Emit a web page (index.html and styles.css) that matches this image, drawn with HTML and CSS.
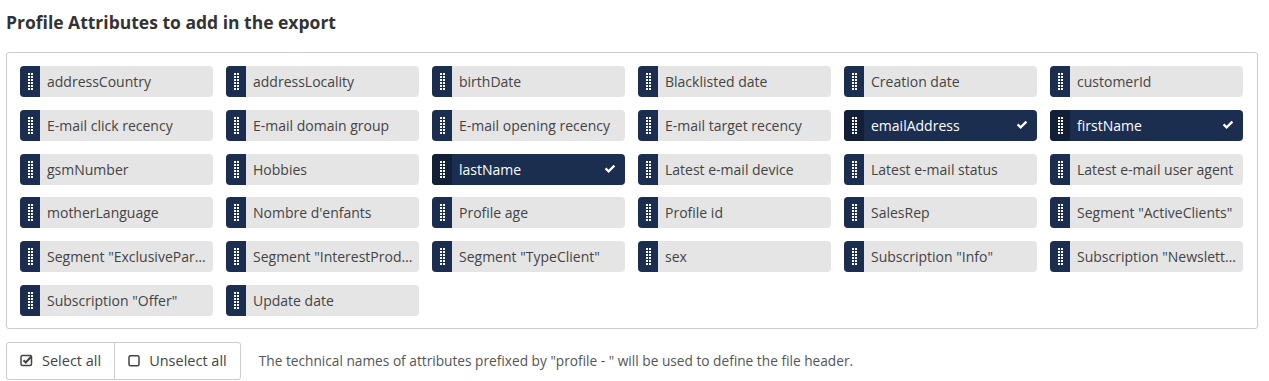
FILE: index.html
```html
<!DOCTYPE html>
<html>
<head>
<meta charset="utf-8">
<link rel="stylesheet" href="styles.css">
</head>
<body>
<h2 class="title">Profile Attributes to add in the export</h2>
<div class="box">
  <div class="grid">
    <div class="chip"><span class="handle"><svg width="5" height="17" viewBox="0 0 5 17"><use href="#grip"/></svg></span><span class="label">addressCountry</span></div>
    <div class="chip"><span class="handle"><svg width="5" height="17" viewBox="0 0 5 17"><use href="#grip"/></svg></span><span class="label">addressLocality</span></div>
    <div class="chip"><span class="handle"><svg width="5" height="17" viewBox="0 0 5 17"><use href="#grip"/></svg></span><span class="label">birthDate</span></div>
    <div class="chip"><span class="handle"><svg width="5" height="17" viewBox="0 0 5 17"><use href="#grip"/></svg></span><span class="label">Blacklisted date</span></div>
    <div class="chip"><span class="handle"><svg width="5" height="17" viewBox="0 0 5 17"><use href="#grip"/></svg></span><span class="label">Creation date</span></div>
    <div class="chip"><span class="handle"><svg width="5" height="17" viewBox="0 0 5 17"><use href="#grip"/></svg></span><span class="label">customerId</span></div>

    <div class="chip"><span class="handle"><svg width="5" height="17" viewBox="0 0 5 17"><use href="#grip"/></svg></span><span class="label">E-mail click recency</span></div>
    <div class="chip"><span class="handle"><svg width="5" height="17" viewBox="0 0 5 17"><use href="#grip"/></svg></span><span class="label">E-mail domain group</span></div>
    <div class="chip"><span class="handle"><svg width="5" height="17" viewBox="0 0 5 17"><use href="#grip"/></svg></span><span class="label">E-mail opening recency</span></div>
    <div class="chip"><span class="handle"><svg width="5" height="17" viewBox="0 0 5 17"><use href="#grip"/></svg></span><span class="label">E-mail target recency</span></div>
    <div class="chip selected"><span class="handle"><svg width="5" height="17" viewBox="0 0 5 17"><use href="#grip"/></svg></span><span class="label">emailAddress</span><svg class="check" width="12" height="10" viewBox="0 0 12 10"><use href="#chk"/></svg></div>
    <div class="chip selected"><span class="handle"><svg width="5" height="17" viewBox="0 0 5 17"><use href="#grip"/></svg></span><span class="label">firstName</span><svg class="check" width="12" height="10" viewBox="0 0 12 10"><use href="#chk"/></svg></div>

    <div class="chip"><span class="handle"><svg width="5" height="17" viewBox="0 0 5 17"><use href="#grip"/></svg></span><span class="label">gsmNumber</span></div>
    <div class="chip"><span class="handle"><svg width="5" height="17" viewBox="0 0 5 17"><use href="#grip"/></svg></span><span class="label">Hobbies</span></div>
    <div class="chip selected"><span class="handle"><svg width="5" height="17" viewBox="0 0 5 17"><use href="#grip"/></svg></span><span class="label">lastName</span><svg class="check" width="12" height="10" viewBox="0 0 12 10"><use href="#chk"/></svg></div>
    <div class="chip"><span class="handle"><svg width="5" height="17" viewBox="0 0 5 17"><use href="#grip"/></svg></span><span class="label">Latest e-mail device</span></div>
    <div class="chip"><span class="handle"><svg width="5" height="17" viewBox="0 0 5 17"><use href="#grip"/></svg></span><span class="label">Latest e-mail status</span></div>
    <div class="chip"><span class="handle"><svg width="5" height="17" viewBox="0 0 5 17"><use href="#grip"/></svg></span><span class="label">Latest e-mail user agent</span></div>

    <div class="chip"><span class="handle"><svg width="5" height="17" viewBox="0 0 5 17"><use href="#grip"/></svg></span><span class="label">motherLanguage</span></div>
    <div class="chip"><span class="handle"><svg width="5" height="17" viewBox="0 0 5 17"><use href="#grip"/></svg></span><span class="label">Nombre d'enfants</span></div>
    <div class="chip"><span class="handle"><svg width="5" height="17" viewBox="0 0 5 17"><use href="#grip"/></svg></span><span class="label">Profile age</span></div>
    <div class="chip"><span class="handle"><svg width="5" height="17" viewBox="0 0 5 17"><use href="#grip"/></svg></span><span class="label">Profile id</span></div>
    <div class="chip"><span class="handle"><svg width="5" height="17" viewBox="0 0 5 17"><use href="#grip"/></svg></span><span class="label">SalesRep</span></div>
    <div class="chip"><span class="handle"><svg width="5" height="17" viewBox="0 0 5 17"><use href="#grip"/></svg></span><span class="label">Segment "ActiveClients"</span></div>

    <div class="chip"><span class="handle"><svg width="5" height="17" viewBox="0 0 5 17"><use href="#grip"/></svg></span><span class="label">Segment "ExclusivePartners"</span></div>
    <div class="chip"><span class="handle"><svg width="5" height="17" viewBox="0 0 5 17"><use href="#grip"/></svg></span><span class="label">Segment "InterestProducts"</span></div>
    <div class="chip"><span class="handle"><svg width="5" height="17" viewBox="0 0 5 17"><use href="#grip"/></svg></span><span class="label">Segment "TypeClient"</span></div>
    <div class="chip"><span class="handle"><svg width="5" height="17" viewBox="0 0 5 17"><use href="#grip"/></svg></span><span class="label">sex</span></div>
    <div class="chip"><span class="handle"><svg width="5" height="17" viewBox="0 0 5 17"><use href="#grip"/></svg></span><span class="label">Subscription "Info"</span></div>
    <div class="chip"><span class="handle"><svg width="5" height="17" viewBox="0 0 5 17"><use href="#grip"/></svg></span><span class="label">Subscription "Newsletter"</span></div>

    <div class="chip"><span class="handle"><svg width="5" height="17" viewBox="0 0 5 17"><use href="#grip"/></svg></span><span class="label">Subscription "Offer"</span></div>
    <div class="chip"><span class="handle"><svg width="5" height="17" viewBox="0 0 5 17"><use href="#grip"/></svg></span><span class="label">Update date</span></div>
  </div>
</div>
<div class="footer">
  <div class="btn-group">
    <button class="btn"><svg width="13" height="13" viewBox="0 0 13 13"><rect x="1" y="1.5" width="10.5" height="10" rx="1.5" fill="none" stroke="#444" stroke-width="1.5"/><path d="M3.5 6.2 L5.8 8.5 L11.5 2.2" fill="none" stroke="#444" stroke-width="2.2"/></svg>Select all</button>
    <button class="btn"><svg width="12" height="13" viewBox="0 0 12 13"><rect x="1" y="1.7" width="10" height="10" rx="1.5" fill="none" stroke="#444" stroke-width="1.5"/></svg>Unselect all</button>
  </div>
  <p class="hint">The technical names of attributes prefixed by "profile - " will be used to define the file header.</p>
</div>
<svg width="0" height="0" class="defs">
  <defs>
    <g id="grip" fill="#fff"><rect x="0" y="0" width="2" height="2"/><rect x="3" y="0" width="2" height="2"/><rect x="0" y="3" width="2" height="2"/><rect x="3" y="3" width="2" height="2"/><rect x="0" y="6" width="2" height="2"/><rect x="3" y="6" width="2" height="2"/><rect x="0" y="9" width="2" height="2"/><rect x="3" y="9" width="2" height="2"/><rect x="0" y="12" width="2" height="2"/><rect x="3" y="12" width="2" height="2"/><rect x="0" y="15" width="2" height="2"/><rect x="3" y="15" width="2" height="2"/></g>
    <path id="chk" d="M0.8 5.2 L2.4 3.6 L4.6 5.8 L9.6 0.8 L11.2 2.4 L4.6 9 Z" fill="#fff"/>
  </defs>
</svg>
</body>
</html>
```
FILE: styles.css
```css
* { box-sizing: border-box; }
body {
  margin: 0;
  padding: 0 11px 0 6px;
  font-family: "Open Sans", "Liberation Sans", sans-serif;
  color: #444;
  background: #fff;
}
.title {
  margin: 0;
  padding-top: 9px;
  height: 52px;
  font-size: 17.5px;
  font-weight: 700;
  line-height: 26px;
  color: #333;
}
.box {
  border: 1px solid #ccc;
  border-radius: 3px;
  padding: 13px 13px 12px 13px;
}
.grid {
  display: grid;
  grid-template-columns: repeat(6, 193px);
  column-gap: 13px;
  row-gap: 12.8px;
}
.chip {
  display: flex;
  align-items: center;
  height: 31px;
  background: #e5e5e5;
  border-radius: 4px;
  overflow: hidden;
  color: #444;
  font-size: 14px;
}
.handle {
  flex: 0 0 20px;
  align-self: stretch;
  display: flex;
  align-items: center;
  justify-content: center;
  background: #1c2e4f;
}
.handle svg { display: block; }
.label {
  flex: 1;
  padding-left: 7px;
  padding-right: 6px;
  white-space: nowrap;
  overflow: hidden;
  text-overflow: ellipsis;
}
.chip.selected {
  background: #1c2e4f;
  color: #fff;
}
.chip.selected .handle { background: #121f37; }
.check { flex: 0 0 auto; margin-right: 9px; }
.footer {
  display: flex;
  align-items: center;
  margin-top: 13px;
}
.btn-group { display: flex; }
.btn {
  display: flex;
  align-items: center;
  gap: 9px;
  height: 38px;
  padding: 0 13px 0 13px;
  background: #fff;
  border: 1px solid #ccc;
  font-family: "Open Sans", "Liberation Sans", sans-serif;
  font-size: 14.5px;
  color: #444;
}
.btn:first-child { border-radius: 3px 0 0 3px; }
.btn:last-child { border-radius: 0 3px 3px 0; margin-left: -1px; }
.hint {
  margin: 0 0 0 18px;
  font-size: 13.7px;
  color: #555;
}
.defs { position: absolute; }
```
